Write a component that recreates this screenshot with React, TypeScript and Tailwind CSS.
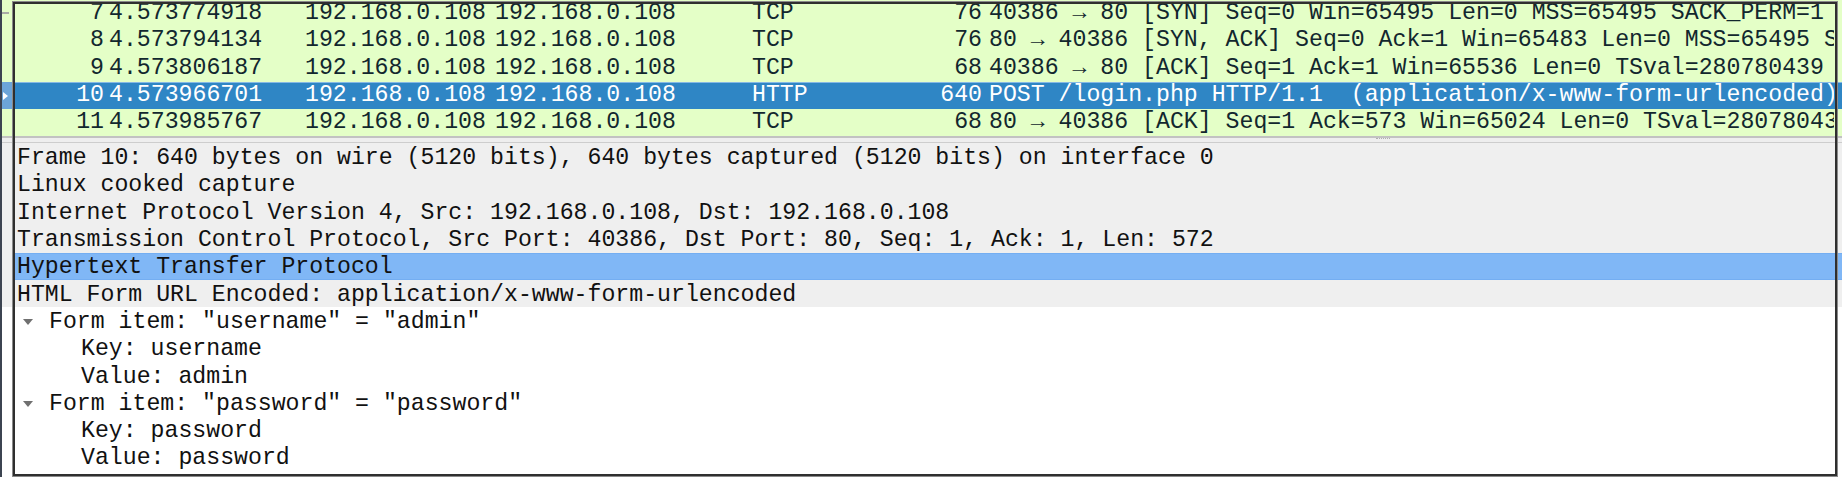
import React from "react";

type Pkt = {
  no: string;
  time: string;
  src: string;
  dst: string;
  proto: string;
  len: string;
  info: string;
  selected?: boolean;
  related?: boolean;
};

const packets: Pkt[] = [
  {
    no: "7",
    time: "4.573774918",
    src: "192.168.0.108",
    dst: "192.168.0.108",
    proto: "TCP",
    len: "76",
    info: "40386 → 80 [SYN] Seq=0 Win=65495 Len=0 MSS=65495 SACK_PERM=1 TSval=280780439 TSecr=0 WS=128",
    related: true,
  },
  {
    no: "8",
    time: "4.573794134",
    src: "192.168.0.108",
    dst: "192.168.0.108",
    proto: "TCP",
    len: "76",
    info: "80 → 40386 [SYN, ACK] Seq=0 Ack=1 Win=65483 Len=0 MSS=65495 SACK_PERM=1 TSval=280780439 TSecr=280780439 WS=128",
  },
  {
    no: "9",
    time: "4.573806187",
    src: "192.168.0.108",
    dst: "192.168.0.108",
    proto: "TCP",
    len: "68",
    info: "40386 → 80 [ACK] Seq=1 Ack=1 Win=65536 Len=0 TSval=280780439 TSecr=280780439",
  },
  {
    no: "10",
    time: "4.573966701",
    src: "192.168.0.108",
    dst: "192.168.0.108",
    proto: "HTTP",
    len: "640",
    info: "POST /login.php HTTP/1.1  (application/x-www-form-urlencoded)",
    selected: true,
  },
  {
    no: "11",
    time: "4.573985767",
    src: "192.168.0.108",
    dst: "192.168.0.108",
    proto: "TCP",
    len: "68",
    info: "80 → 40386 [ACK] Seq=1 Ack=573 Win=65024 Len=0 TSval=280780439 TSecr=280780439",
  },
];

type Detail = { text: string; level: 0 | 1 | 2; shaded?: boolean; selected?: boolean };

const details: Detail[] = [
  { text: "Frame 10: 640 bytes on wire (5120 bits), 640 bytes captured (5120 bits) on interface 0", level: 0, shaded: true },
  { text: "Linux cooked capture", level: 0, shaded: true },
  { text: "Internet Protocol Version 4, Src: 192.168.0.108, Dst: 192.168.0.108", level: 0, shaded: true },
  { text: "Transmission Control Protocol, Src Port: 40386, Dst Port: 80, Seq: 1, Ack: 1, Len: 572", level: 0, shaded: true },
  { text: "Hypertext Transfer Protocol", level: 0, shaded: true, selected: true },
  { text: "HTML Form URL Encoded: application/x-www-form-urlencoded", level: 0, shaded: true },
  { text: 'Form item: "username" = "admin"', level: 1 },
  { text: "Key: username", level: 2 },
  { text: "Value: admin", level: 2 },
  { text: 'Form item: "password" = "password"', level: 1 },
  { text: "Key: password", level: 2 },
  { text: "Value: password", level: 2 },
];

function PacketRow({ p }: { p: Pkt }) {
  const sel = !!p.selected;
  return (
    <div
      className={
        sel
          ? "h-[27.3px] bg-[#2f86c5] text-white shadow-[inset_0_1px_0_#86b9e4]"
          : "h-[27.3px] bg-[#e4ffc7] text-[#12272e]"
      }
    >
      <div className="w-[1832px] h-full overflow-hidden flex whitespace-pre leading-[26px]">
        <div
          className={
            sel
              ? "w-[11px] shrink-0 h-full bg-[#6ca5d9] flex items-center"
              : "w-[11px] shrink-0 h-full flex items-center"
          }
        >
          {sel ? (
            <svg width="5" height="8" viewBox="0 0 5 8" className="ml-[1px]">
              <polygon points="0,0 5,4 0,8" fill="#ffffff" />
            </svg>
          ) : null}
          {p.related ? <div className="w-[7px] h-[2px] bg-[#a9aca6] -mt-[1px]" /> : null}
        </div>
        <div className="w-[91px] shrink-0 text-right">{p.no}</div>
        <div className="w-[5px] shrink-0" />
        <div className="w-[196px] shrink-0">{p.time}</div>
        <div className="w-[190px] shrink-0">{p.src}</div>
        <div className="w-[257px] shrink-0">{p.dst}</div>
        <div className="w-[150px] shrink-0">{p.proto}</div>
        <div className="w-[80px] shrink-0 text-right">{p.len}</div>
        <div className="pl-[7px] shrink-0">{p.info}</div>
      </div>
    </div>
  );
}

function DetailRow({ d }: { d: Detail }) {
  const rowBg = d.shaded ? "bg-[#efefef]" : "bg-white";
  return (
    <div className={"h-[27.3px] shrink-0 flex whitespace-pre leading-[26px] text-[#111111] " + rowBg}>
      <div className="w-[13px] shrink-0" />
      <div
        className={
          d.selected
            ? "flex-1 flex items-center pt-[2px] bg-[#80b7f6] shadow-[inset_0_1px_0_#74aef2,inset_0_-1px_0_#74aef2]"
            : "flex-1 flex items-center pt-[2px]"
        }
      >
        {d.level === 0 ? <span className="pl-[2px]">{d.text}</span> : null}
        {d.level === 1 ? (
          <>
            <span className="pl-[8px] w-[34px] shrink-0 flex items-center">
              <svg width="10" height="6" viewBox="0 0 10 6">
                <polygon points="0,0 10,0 5,6" fill="#707070" />
              </svg>
            </span>
            <span>{d.text}</span>
          </>
        ) : null}
        {d.level === 2 ? <span className="pl-[66px]">{d.text}</span> : null}
      </div>
    </div>
  );
}

export default function App() {
  return (
    <div className="relative w-[1842px] h-[477px] overflow-hidden bg-white flex font-['Liberation_Mono','DejaVu_Sans_Mono',monospace] text-[23.2px]">
      <div className="w-[2px] shrink-0 bg-[#3c4451]" />
      <div className="flex-1 min-w-0 flex flex-col">
        <div className="flex flex-col shrink-0">
          {packets.map((p) => (
            <PacketRow key={p.no} p={p} />
          ))}
        </div>
        <div className="h-[7px] shrink-0 bg-[#eeeeee] border-t-2 border-t-[#c2c2c2] border-b border-b-[#cdcdcd] flex items-start pl-[1374px]">
          <div className="w-[14px] border-t border-dotted border-[#b0b0b0]" />
        </div>
        <div className="flex-1 flex flex-col bg-white">
          {details.map((d, i) => (
            <DetailRow key={i} d={d} />
          ))}
        </div>
      </div>
      <div className="absolute left-[13px] top-[2px] w-[1824px] h-[474px] border-2 border-[#2f2f2f] shadow-[0_0_0_1px_#8a8a8a] pointer-events-none" />
    </div>
  );
}
